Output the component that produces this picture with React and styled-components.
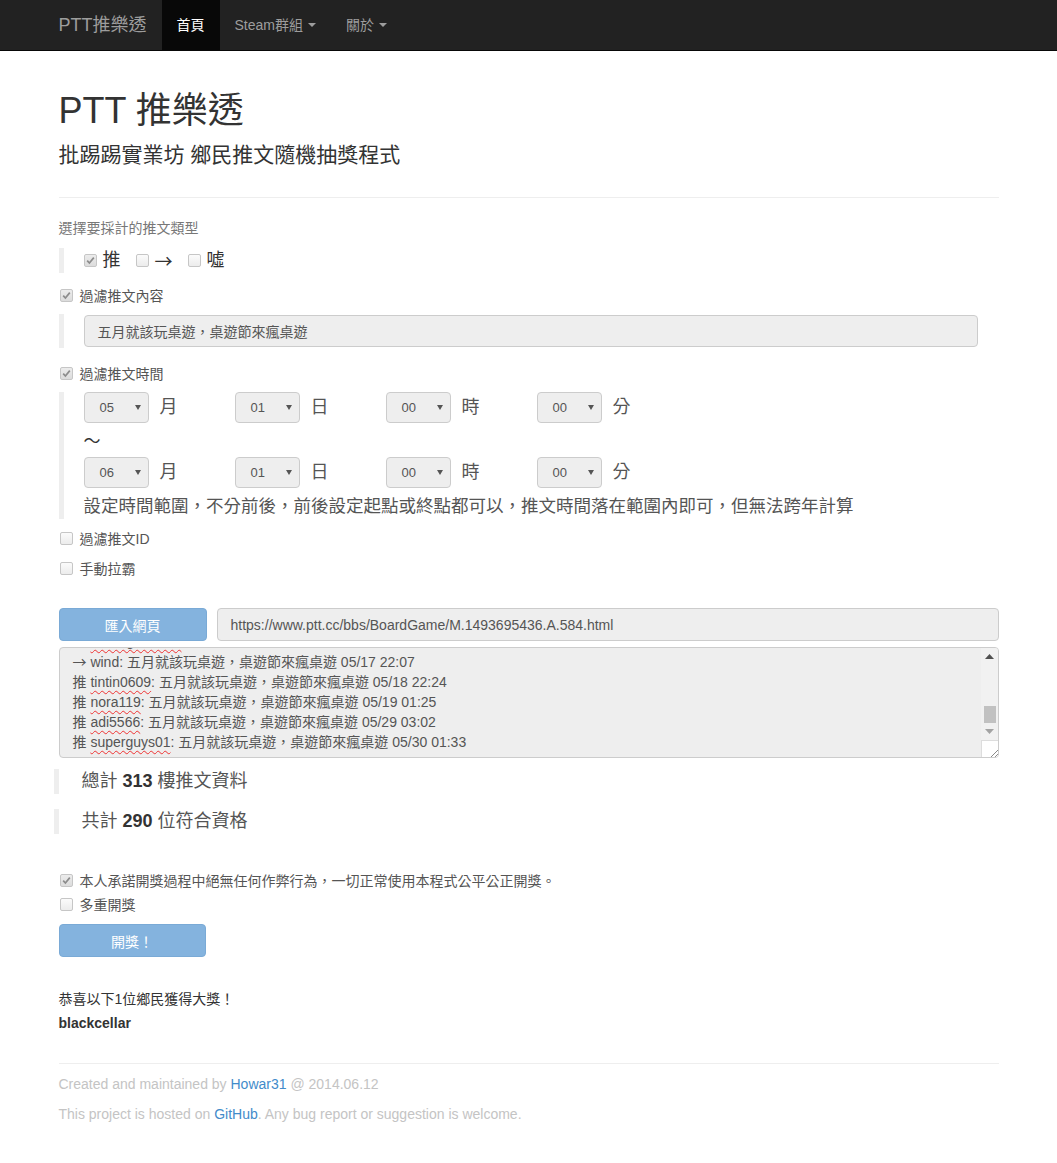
import React from 'react'
import styled, { createGlobalStyle } from 'styled-components'

const GlobalStyle = createGlobalStyle`
    body {
        margin: 0;
        background: #fff;
        font-family: "Liberation Sans", "Noto Sans CJK TC", sans-serif;
        font-size: 14px;
        color: #333;
    }
    a { text-decoration: none; }
`;

const Navbar = styled.nav`
    background: #222;
    height: 50px;
    border-bottom: 1px solid #080808;
`;
const NavInner = styled.div`
    width: 940px;
    margin: 0 auto;
    display: flex;
    height: 50px;
`;
const Brand = styled.a`
    margin-left: -15px;
    padding: 0 15px;
    font-size: 18px;
    line-height: 50px;
    color: #9d9d9d;
`;
const NavItem = styled.a`
    padding: 0 15px;
    line-height: 50px;
    font-size: 14px;
    color: ${p => p.$active ? '#fff' : '#9d9d9d'};
    background: ${p => p.$active ? '#080808' : 'transparent'};
    display: flex;
    align-items: center;
`;
const Caret = styled.span`
    width: 0;
    height: 0;
    margin-left: 5px;
    border-top: 4px solid #9d9d9d;
    border-left: 4px solid transparent;
    border-right: 4px solid transparent;
`;

const Container = styled.main`
    width: 940px;
    margin: 0 auto;
    padding-bottom: 40px;
`;
const Header = styled.header`
    padding: 40px 0 28px;
    border-bottom: 1px solid #eee;
`;
const Title = styled.h1`
    margin: 0;
    font-size: 36px;
    font-weight: 400;
    line-height: 40px;
`;
const Subtitle = styled.p`
    margin: 10px 0 0;
    font-size: 21px;
    font-weight: 400;
    line-height: 28px;
`;

const SectionLabel = styled.div`
    margin-top: 21px;
    font-size: 14px;
    line-height: 18px;
    color: #777;
`;
const Quote = styled.div`
    margin-top: ${p => p.$top}px;
    border-left: 5px solid #eee;
    padding-left: 20px;
    font-size: 18px;
    color: #555;
`;
const TypeRow = styled.div`
    height: 25px;
    display: flex;
    align-items: center;
`;
const TypeOption = styled.label`
    display: flex;
    align-items: center;
    gap: 6px;
    margin-right: 15px;
    color: #333;
    line-height: 25px;
`;
const CjkArrow = styled.span`
    font-family: "Noto Sans CJK TC", sans-serif;
`;
const CheckRow = styled.label`
    margin-top: ${p => p.$top}px;
    height: 18px;
    display: flex;
    align-items: center;
    gap: 7px;
    padding-left: 1px;
    font-size: 14px;
    color: #555;
`;
const Box = styled.span`
    width: 13px;
    height: 13px;
    box-sizing: border-box;
    border: 1px solid #c6c6c6;
    border-radius: 2px;
    background: ${p => p.$checked ? 'linear-gradient(#ececec, #dcdcdc)' : 'linear-gradient(#fbfbfb, #ececec)'};
    display: inline-flex;
    align-items: center;
    justify-content: center;
    flex-shrink: 0;
`;
const TextBox = styled.div`
    box-sizing: border-box;
    height: ${p => p.$h || 33}px;
    width: ${p => p.$w ? p.$w + 'px' : 'auto'};
    flex: ${p => p.$w ? 'none' : 1};
    border: 1px solid #ccc;
    border-radius: 4px;
    background: #eee;
    padding: 0 13px;
    display: flex;
    align-items: center;
    font-size: 14px;
    color: #555;
`;
const InputWrap = styled.div`
    padding: 1px 0;
`;

const TimeRow = styled.div`
    display: grid;
    grid-template-columns: repeat(4, 151px);
    height: 31px;
`;
const TimeGroup = styled.div`
    display: flex;
    align-items: center;
    gap: 11px;
`;
const Unit = styled.span`
    margin-top: -5px;
`;
const Select = styled.div`
    box-sizing: border-box;
    width: 65px;
    height: 31px;
    border: 1px solid #ccc;
    border-radius: 4px;
    background: #eee;
    display: flex;
    align-items: center;
    justify-content: space-between;
    padding: 0 7px 0 15px;
    font-size: 13px;
    color: #555;
`;
const Arrow = styled.span`
    width: 0;
    height: 0;
    border-top: 5px solid #555;
    border-left: 3px solid transparent;
    border-right: 3px solid transparent;
`;
const Tilde = styled.div`
    height: 34px;
    line-height: 34px;
    font-size: 17px;
    color: #333;
    font-family: "Noto Sans CJK TC", sans-serif;
`;
const Note = styled.div`
    line-height: 26px;
    padding-top: 5px;
    font-size: 17.5px;
    color: #555;
`;

const ImportRow = styled.div`
    margin-top: 31px;
    display: flex;
    gap: 10px;
`;
const Button = styled.button`
    box-sizing: border-box;
    width: ${p => p.$w}px;
    height: 33px;
    margin-top: ${p => p.$top || 0}px;
    border: 1px solid #7aaad6;
    border-radius: 4px;
    background: #84b3de;
    color: #fff;
    font-family: inherit;
    font-size: 14px;
    padding: 0;
`;

const LogBox = styled.div`
    box-sizing: border-box;
    margin-top: 6px;
    height: 111px;
    border: 1px solid #ccc;
    border-radius: 4px;
    background: #eee;
    display: flex;
    overflow: hidden;
`;
const LogLines = styled.div`
    flex: 1;
    display: flex;
    flex-direction: column;
    justify-content: flex-end;
    padding: 0 13px 5px;
    overflow: hidden;
    font-size: 14px;
    line-height: 20px;
    color: #555;
`;
const Line = styled.div`
    white-space: nowrap;
`;
const UserId = styled.span`
    text-decoration: underline wavy #e33;
    text-decoration-thickness: 1px;
    text-underline-offset: 3px;
    text-decoration-skip-ink: none;
`;
const ScrollBar = styled.div`
    width: 17px;
    display: flex;
    flex-direction: column;
    background: #f1f1f1;
`;
const ScrollBtn = styled.div`
    height: 17px;
    display: flex;
    align-items: center;
    justify-content: center;
`;
const Track = styled.div`
    flex: 1;
    display: flex;
    flex-direction: column;
    justify-content: flex-end;
    padding: 0 2px 0 3px;
`;
const Thumb = styled.div`
    height: 17px;
    background: #c1c1c1;
`;
const Grip = styled.div`
    height: 16px;
    background: #fff;
    border-top: 1px solid #ddd;
    border-left: 1px solid #ddd;
    display: flex;
    align-items: flex-end;
    justify-content: flex-end;
`;

const StatQuote = styled.div`
    margin-top: ${p => p.$top}px;
    margin-left: -5px;
    border-left: 5px solid #eee;
    padding-left: 23px;
    height: 25px;
    line-height: 25px;
    font-size: 18px;
    color: #555;
    b { color: #333; }
`;
const Congrats = styled.div`
    margin-top: 33px;
    font-size: 14px;
    line-height: 18px;
`;
const Winner = styled.div`
    margin-top: 6px;
    font-weight: bold;
    line-height: 18px;
`;
const Footer = styled.footer`
    margin-top: 31px;
    border-top: 1px solid #eee;
    padding-top: 10px;
    color: #c4c4c4;
    line-height: 20px;
    p { margin: 0 0 10px; }
    a { color: #428bca; }
`;

function Check({ checked }) {
    return (
        <Box $checked={checked}>
            {checked && (
                <svg width="9" height="9" viewBox="0 0 9 9">
                    <path d="M1.2 4.6 L3.4 7 L7.8 1.6" stroke="#8c8c8c" strokeWidth="1.7" fill="none" />
                </svg>
            )}
        </Box>
    )
}

function TimeSelects({ month }) {
    const fields = [[month, '月'], ['01', '日'], ['00', '時'], ['00', '分']];
    return (
        <TimeRow>
            {fields.map(([v, unit], i) => (
                <TimeGroup key={i}>
                    <Select>{v}<Arrow /></Select>
                    <Unit>{unit}</Unit>
                </TimeGroup>
            ))}
        </TimeRow>
    )
}

const pushes = [
    ['推', 'boardgamer77', '05/16 23:41', true],
    ['→', 'wind', '05/17 22:07', false],
    ['推', 'tintin0609', '05/18 22:24', true],
    ['推', 'nora119', '05/19 01:25', true],
    ['推', 'adi5566', '05/29 03:02', true],
    ['推', 'superguys01', '05/30 01:33', true],
];

export default function App() {
    return (
        <>
            <GlobalStyle />
            <Navbar>
                <NavInner>
                    <Brand>PTT推樂透</Brand>
                    <NavItem $active>首頁</NavItem>
                    <NavItem>Steam群組<Caret /></NavItem>
                    <NavItem>關於<Caret /></NavItem>
                </NavInner>
            </Navbar>
            <Container>
                <Header>
                    <Title>PTT 推樂透</Title>
                    <Subtitle>批踢踢實業坊 鄉民推文隨機抽獎程式</Subtitle>
                </Header>

                <SectionLabel>選擇要採計的推文類型</SectionLabel>
                <Quote $top={11}>
                    <TypeRow>
                        <TypeOption><Check checked />推</TypeOption>
                        <TypeOption><Check /><CjkArrow>→</CjkArrow></TypeOption>
                        <TypeOption><Check />噓</TypeOption>
                    </TypeRow>
                </Quote>

                <CheckRow $top={13}><Check checked />過濾推文內容</CheckRow>
                <Quote $top={10}>
                    <InputWrap>
                        <TextBox $w={894} $h={32}>五月就該玩桌遊，桌遊節來瘋桌遊</TextBox>
                    </InputWrap>
                </Quote>

                <CheckRow $top={16}><Check checked />過濾推文時間</CheckRow>
                <Quote $top={10}>
                    <TimeSelects month="05" />
                    <Tilde>～</Tilde>
                    <TimeSelects month="06" />
                    <Note>設定時間範圍，不分前後，前後設定起點或終點都可以，推文時間落在範圍內即可，但無法跨年計算</Note>
                </Quote>

                <CheckRow $top={10}><Check />過濾推文ID</CheckRow>
                <CheckRow $top={12}><Check />手動拉霸</CheckRow>

                <ImportRow>
                    <Button $w={148}>匯入網頁</Button>
                    <TextBox>https://www.ptt.cc/bbs/BoardGame/M.1493695436.A.584.html</TextBox>
                </ImportRow>
                <LogBox>
                    <LogLines>
                        {pushes.map(([tag, id, time, marked], i) => (
                            <Line key={i}>
                                {tag === '→' ? <CjkArrow>→</CjkArrow> : tag} {marked ? <UserId>{id}</UserId> : id}: 五月就該玩桌遊，桌遊節來瘋桌遊 {time}
                            </Line>
                        ))}
                    </LogLines>
                    <ScrollBar>
                        <ScrollBtn>
                            <svg width="9" height="5" viewBox="0 0 9 5"><path d="M0 5 L4.5 0 L9 5 Z" fill="#505050" /></svg>
                        </ScrollBtn>
                        <Track><Thumb /></Track>
                        <ScrollBtn>
                            <svg width="9" height="5" viewBox="0 0 9 5"><path d="M0 0 L4.5 5 L9 0 Z" fill="#a3a3a3" /></svg>
                        </ScrollBtn>
                        <Grip>
                            <svg width="9" height="9" viewBox="0 0 9 9">
                                <path d="M2 9 L9 2 M6 9 L9 6" stroke="#888" strokeWidth="1" />
                            </svg>
                        </Grip>
                    </ScrollBar>
                </LogBox>

                <StatQuote $top={11}>總計 <b>313</b> 樓推文資料</StatQuote>
                <StatQuote $top={15}>共計 <b>290</b> 位符合資格</StatQuote>

                <CheckRow $top={37}><Check checked />本人承諾開獎過程中絕無任何作弊行為，一切正常使用本程式公平公正開獎。</CheckRow>
                <CheckRow $top={6}><Check />多重開獎</CheckRow>
                <Button $w={147} $top={11}>開獎！</Button>

                <Congrats>恭喜以下1位鄉民獲得大獎！</Congrats>
                <Winner>blackcellar</Winner>

                <Footer>
                    <p>Created and maintained by <a>Howar31</a> @ 2014.06.12</p>
                    <p>This project is hosted on <a>GitHub</a>. Any bug report or suggestion is welcome.</p>
                </Footer>
            </Container>
        </>
    )
}
